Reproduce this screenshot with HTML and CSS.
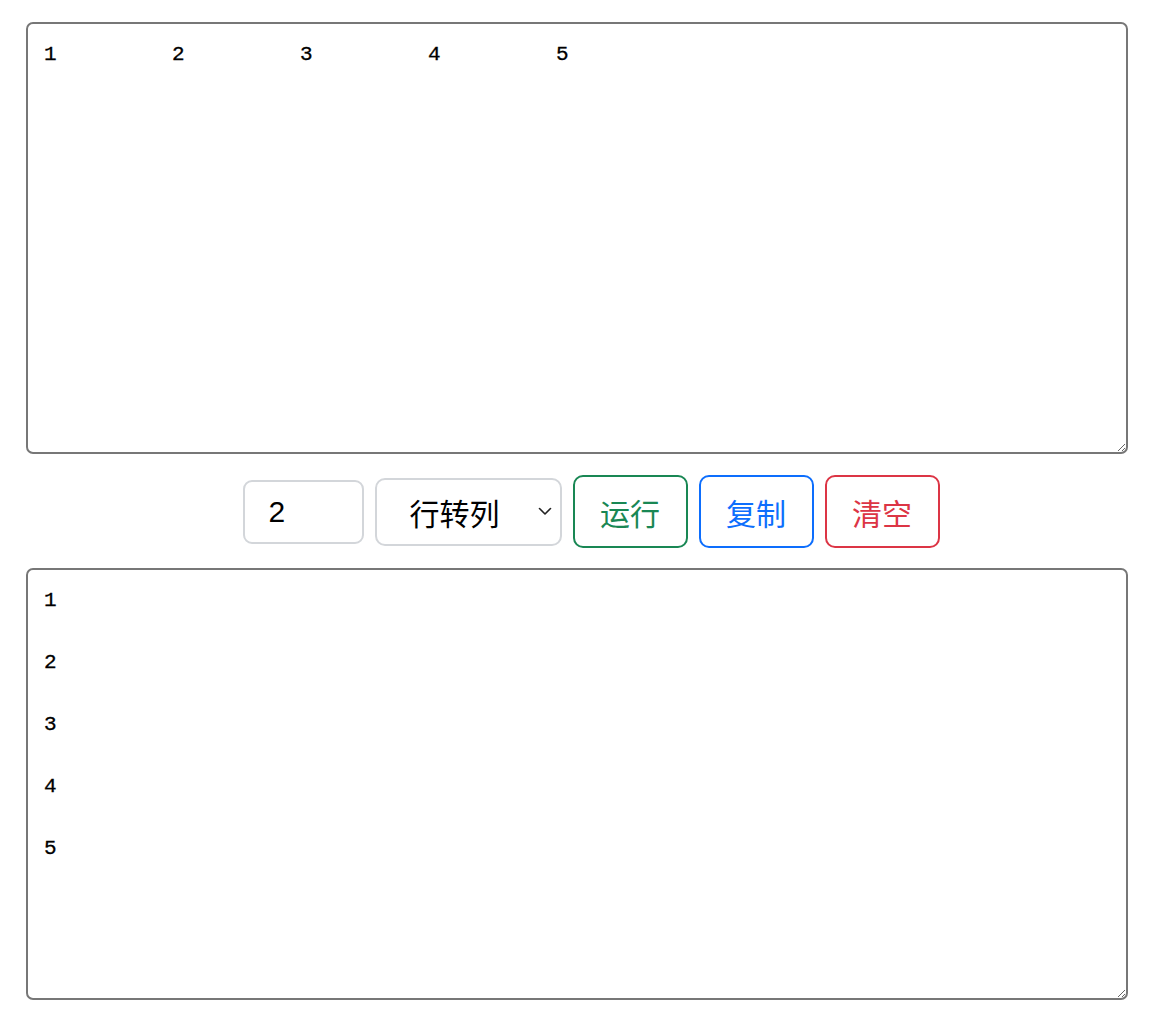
FILE: index.html
```html
<!DOCTYPE html>
<html lang="zh">
<head>
<meta charset="utf-8">
<title>行转列</title>
<link rel="stylesheet" href="styles.css">
</head>
<body>
<div class="page">
<textarea class="box" spellcheck="false">1	2	3	4	5</textarea>
<div class="controls">
  <input class="num" type="text" value="2">
  <div class="select-wrap">
    <span class="select-label">行转列</span>
    <svg class="chev" width="14" height="9" viewBox="0 0 14 9"><path d="M1.5 1.5 L7 7 L12.5 1.5" fill="none" stroke="#222" stroke-width="1.6" stroke-linecap="round" stroke-linejoin="round"/></svg>
  </div>
  <button class="btn btn-green">运行</button>
  <button class="btn btn-blue">复制</button>
  <button class="btn btn-red">清空</button>
</div>
<textarea class="box" spellcheck="false">1

2

3

4

5</textarea>
</div>
</body>
</html>
```
FILE: styles.css
```css
html, body {
  margin: 0;
  padding: 0;
  background: #fff;
}
.page {
  padding: 22px 25px 0 26px;
  display: flex;
  flex-direction: column;
}
.box {
  box-sizing: border-box;
  width: 1102px;
  height: 432px;
  border: 2px solid #777;
  border-radius: 7px;
  padding: 15px 16px;
  margin: 0;
  font-family: "Liberation Mono", "DejaVu Sans Mono", monospace;
  font-size: 21px;
  font-weight: normal;
  line-height: 31px;
  color: #000;
  -webkit-text-stroke: 0.3px #000;
  tab-size: 128px;
  -moz-tab-size: 128px;
  resize: both;
  outline: none;
  background: #fff;
}
.controls {
  display: flex;
  align-items: center;
  justify-content: center;
  gap: 11px;
  margin: 21px 0 20px;
  padding-left: 28px;
  font-family: "Noto Sans CJK SC", "Noto Sans", sans-serif;
}
.num {
  box-sizing: border-box;
  width: 121px;
  height: 64px;
  border: 2px solid #d3d6da;
  border-radius: 9px;
  padding: 0 0 0 24px;
  font-family: "Liberation Sans", Arial, sans-serif;
  font-size: 30px;
  color: #000;
  outline: none;
}
.select-wrap {
  box-sizing: border-box;
  width: 187px;
  height: 68px;
  border: 2px solid #d3d6da;
  border-radius: 10px;
  display: flex;
  align-items: center;
  padding: 0 8px 0 33px;
}
.select-label {
  font-size: 30px;
  color: #000;
  flex: 1;
  line-height: 1;
}
.chev {
  display: block;
}
.btn {
  box-sizing: border-box;
  width: 115px;
  height: 73px;
  border: 2px solid;
  border-radius: 10px;
  background: #fff;
  font-family: "Noto Sans CJK SC", sans-serif;
  font-size: 30px;
  line-height: 1;
  padding: 0;
  cursor: pointer;
}
.btn-green { color: #198754; border-color: #198754; }
.btn-blue { color: #0d6efd; border-color: #0d6efd; }
.btn-red { color: #dc3545; border-color: #dc3545; }
```
